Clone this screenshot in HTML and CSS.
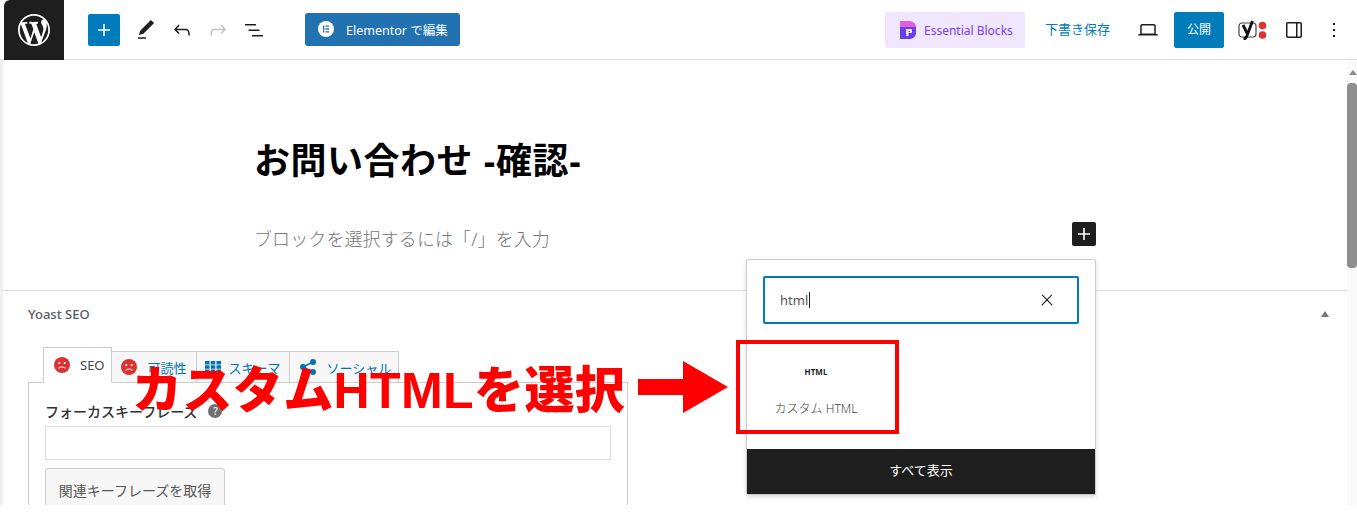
FILE: index.html
```html
<!DOCTYPE html>
<html lang="ja">

<head>
    <meta charset="UTF-8">
    <title>お問い合わせ -確認-</title>
    <link rel="stylesheet" href="styles.css">
</head>

<body>
    <div class="app">
        <header class="topbar">
            <a class="logo">
                <svg viewBox="0 0 20 20" width="32" height="32"><path fill="#fff" d="M20 10c0-5.51-4.49-10-10-10C4.48 0 0 4.49 0 10c0 5.52 4.48 10 10 10 5.51 0 10-4.48 10-10zM7.78 15.37L4.37 6.22c.55-.02 1.17-.08 1.17-.08.5-.06.44-1.13-.06-1.11 0 0-1.45.11-2.37.11-.18 0-.37 0-.58-.01C4.12 2.69 6.87 1.11 10 1.11c2.33 0 4.45.87 6.05 2.34-.68-.11-1.65.39-1.65 1.58 0 .74.45 1.36.9 2.1.35.61.55 1.36.55 2.46 0 1.49-1.4 5-1.4 5l-3.03-8.37c.54-.02.82-.17.82-.17.5-.05.44-1.25-.06-1.22 0 0-1.44.12-2.38.12-.87 0-2.33-.12-2.33-.12-.5-.03-.56 1.2-.06 1.22l.92.08 1.26 3.41zM17.41 10c.24-.64.74-1.87.43-4.25.7 1.29 1.05 2.71 1.05 4.25 0 3.29-1.73 6.24-4.4 7.78.97-2.59 1.94-5.2 2.92-7.78zM6.1 18.09C3.12 16.65 1.11 13.53 1.11 10c0-1.3.23-2.48.72-3.59C3.25 10.3 4.67 14.2 6.1 18.09zm4.03-6.63l2.58 6.98c-.86.29-1.76.45-2.71.45-.79 0-1.57-.11-2.29-.33.81-2.38 1.62-4.74 2.42-7.1z"/></svg>
            </a>

            <div class="tools">
                <button class="btn-add">
                    <svg viewBox="0 0 24 24" width="24" height="24"><path fill="#fff" d="M18 11.2h-5.2V6h-1.6v5.2H6v1.6h5.2V18h1.6v-5.2H18z"/></svg>
                </button>
                <span class="tool"><svg viewBox="0 0 24 24" width="24" height="24"><path d="M20.1 5.1L16.9 2 6.2 12.7l-1.3 4.4 4.5-1.3L20.1 5.1zM4 20.8h8v-1.5H4v1.5z"/></svg></span>
                <span class="tool"><svg viewBox="0 0 24 24" width="24" height="24"><path d="M18.3 11.7c-.6-.6-1.4-.9-2.3-.9H6.7l2.9-3.3-1.1-1-4.5 5L8.5 16l1-1-2.7-2.7H16c.5 0 .9.2 1.3.5 1 1 1 3.4 1 4.5v.3h1.5v-.2c0-1.5 0-4.3-1.5-5.7z"/></svg></span>
                <span class="tool off"><svg viewBox="0 0 24 24" width="24" height="24"><path d="M15.6 6.5l-1.1 1 2.9 3.3H8c-.9 0-1.7.3-2.3.9-1.4 1.5-1.4 4.2-1.4 5.6v.2h1.5v-.3c0-1.1 0-3.5 1-4.5.3-.3.7-.5 1.3-.5h9.2L14.5 15l1.1 1.1 4.6-4.6-4.6-5z"/></svg></span>
                <span class="tool"><svg viewBox="0 0 24 24" width="24" height="24"><path d="M3 6h11v1.5H3V6zm3.5 5.5h11V13h-11v-1.5zM21 17H10v1.5h11V17z"/></svg></span>
            </div>

            <a class="btn-elementor">
                <svg viewBox="0 0 16 16" width="16" height="16"><circle cx="8" cy="8" r="8" fill="#fff"/><path fill="#2271b1" d="M5 4.500h1.300v7H5zM7.500 4.500h3.500v1.300H7.500zM7.500 7.350h3.500v1.300H7.500zM7.500 10.200h3.500v1.300H7.500z"/></svg>
                Elementor で編集
            </a>

            <div class="right">
                <a class="btn-eb">
                    <svg viewBox="0 0 16 18" width="16" height="18">
                        <path fill="#e55fd8" d="M0 0h9c4 0 7 2.500 7 6v2H0z"/>
                        <path fill="#6a3df0" d="M0 6h16v6c0 3.500-3 6-7 6H0z"/>
                        <path fill="#f0e6fd" d="M6 8h6v4H8.500v3H6z"/>
                        <path fill="#6a3df0" d="M8.500 10H10v1H8.500z"/>
                    </svg>
                    <span class="eb-label">Essential Blocks</span>
                </a>
                <a class="draft">下書き保存</a>
                <span class="tool view"><svg viewBox="0 0 24 24" width="24" height="24"><path d="M20.5 16h-.7V8c0-1.100-.9-2-2-2H6.200c-1.100 0-2 .9-2 2v8h-.7c-.8 0-1.500.7-1.500 1.500h20c0-.8-.7-1.500-1.500-1.500zM5.700 8c0-.3.2-.5.5-.5h11.600c.3 0 .5.2.5.5v7.600H5.700V8z"/></svg></span>
                <button class="btn-publish">公開</button>
                <span class="yoast">
                    <svg viewBox="0 0 30 20" width="30" height="20">
                        <rect x="1" y="3" width="17" height="14" rx="3" fill="none" stroke="#444" stroke-width="1.200"/>
                        <path fill="none" stroke="#111" stroke-width="2.800" d="M5 5l4.500 9M14.500 1L8.500 17c-.5 1-1.500 1.800-3 2"/>
                        <circle cx="24.500" cy="5.500" r="3.800" fill="#dc3232"/>
                        <circle cx="24.500" cy="15" r="3.800" fill="#dc3232"/>
                    </svg>
                </span>
                <span class="tool side"><svg viewBox="0 0 24 24" width="24" height="24"><path d="M18 4H6c-1.100 0-2 .9-2 2v12c0 1.100.9 2 2 2h12c1.100 0 2-.9 2-2V6c0-1.100-.9-2-2-2zM6 18.500c-.3 0-.5-.2-.5-.5V6c0-.3.2-.5.5-.5h8v13H6zm12.500-.5c0 .3-.2.5-.5.5h-2.500v-13H18c.3 0 .5.2.5.5v12z"/></svg></span>
                <span class="tool more"><svg viewBox="0 0 24 24" width="24" height="24"><path d="M13 19h-2v-2h2v2zm0-6h-2v-2h2v2zm0-6h-2V5h2v2z"/></svg></span>
            </div>
        </header>

        <div class="main">
            <div class="canvas">
                <section class="editor">
                    <h1 class="post-title">お問い合わせ -確認-</h1>
                    <div class="block-row">
                        <span class="placeholder">ブロックを選択するには「/」を入力</span>
                        <span class="inserter">
                            <svg viewBox="0 0 24 24" width="24" height="24"><path fill="#fff" d="M18 11.200h-5.200V6h-1.600v5.200H6v1.600h5.200V18h1.600v-5.200H18z"/></svg>
                        </span>
                    </div>
                </section>

                <section class="seo">
                    <div class="seo-head">
                        <h2>Yoast SEO</h2>
                        <span class="caret"></span>
                    </div>
                    <div class="tabs">
                        <span class="tab active">
                            <svg viewBox="0 0 16 16" width="16" height="16"><circle cx="8" cy="8" r="8" fill="#dc3232"/><circle cx="5.300" cy="6" r="1.100" fill="#fff"/><circle cx="10.700" cy="6" r="1.100" fill="#fff"/><path d="M4.500 11.500c1-2 6-2 7 0" fill="none" stroke="#fff" stroke-width="1.100"/></svg>
                            <span class="tab-dark">SEO</span>
                        </span>
                        <span class="tab">
                            <svg viewBox="0 0 16 16" width="16" height="16"><circle cx="8" cy="8" r="8" fill="#dc3232"/><circle cx="5.300" cy="6" r="1.100" fill="#fff"/><circle cx="10.700" cy="6" r="1.100" fill="#fff"/><path d="M4.500 11.500c1-2 6-2 7 0" fill="none" stroke="#fff" stroke-width="1.100"/></svg>
                            可読性
                        </span>
                        <span class="tab tab-schema">
                            <svg viewBox="0 0 16 12" width="16" height="12"><path fill="#0075b3" d="M0 0h4.500v3.500H0zM5.750 0h4.500v3.500h-4.500zM11.500 0H16v3.500h-4.500zM0 4.250h4.500v3.500H0zM5.750 4.250h4.500v3.500h-4.500zM11.500 4.250H16v3.500h-4.500zM0 8.500h4.500V12H0zM5.750 8.500h4.500V12h-4.500zM11.500 8.500H16V12h-4.500z"/></svg>
                            スキーマ
                        </span>
                        <span class="tab tab-social">
                            <svg viewBox="0 0 16 16" width="16" height="16"><path d="M13 3L3 8l10 5" fill="none" stroke="#0075b3" stroke-width="1.500"/><circle cx="13" cy="3" r="3" fill="#0075b3"/><circle cx="3" cy="8" r="3" fill="#0075b3"/><circle cx="13" cy="13" r="3" fill="#0075b3"/></svg>
                            ソーシャル
                        </span>
                    </div>
                    <div class="tab-panel">
                        <div class="field-label">
                            フォーカスキーフレーズ
                            <span class="help">?</span>
                        </div>
                        <div class="text-input"></div>
                        <button class="btn-related">関連キーフレーズを取得</button>
                    </div>
                </section>
            </div>

            <div class="scrollbar">
                <span class="scroll-up"></span>
                <span class="scroll-thumb"></span>
            </div>
        </div>

        <!-- block inserter popover -->
        <div class="popover">
            <div class="search">
                <span class="search-text">html</span>
                <svg viewBox="0 0 24 24" width="18" height="18"><path fill="#1e1e1e" d="M13 11.800l6.100-6.300-1-1-6.100 6.200-6.100-6.200-1 1 6.100 6.300-6.500 6.700 1 1 6.500-6.600 6.500 6.600 1-1z"/></svg>
            </div>
            <div class="results">
                <div class="result">
                    <span class="result-icon">HTML</span>
                    <span class="result-name">カスタム HTML</span>
                </div>
            </div>
            <div class="show-all">すべて表示</div>
        </div>

        <!-- annotations on the screenshot -->
        <div class="note">カスタムHTMLを選択</div>
        <svg class="note-arrow" viewBox="0 0 90 52" width="90" height="52"><path fill="#f00" d="M0 18h45V0l45 26-45 26V34H0z"/></svg>
        <div class="note-box"></div>
    </div>
</body>

</html>
```

FILE: styles.css
```css
* {
    box-sizing: border-box;
}

html,
body {
    margin: 0;
    background: #fff;
}

body {
    font-family: "Noto Sans", "Noto Sans CJK JP", sans-serif;
    font-size: 13px;
    color: #1e1e1e;
}

button {
    font: inherit;
    border: 0;
    padding: 0;
}

.app {
    position: relative;
    height: 505px;
    overflow: hidden;
    padding-left: 3px;
    background: #f0f0f0;
}

/* top bar */

.topbar {
    display: flex;
    align-items: center;
    height: 60px;
    margin-left: -3px;
    padding-left: 4px;
    background: #fff;
    border-bottom: 1px solid #e0e0e0;
}

.logo {
    display: flex;
    align-items: center;
    justify-content: center;
    width: 60px;
    height: 60px;
    background: #1e1e1e;
    border-top-left-radius: 6px;
}

.tools {
    display: flex;
    align-items: center;
    margin-left: 24px;
    margin-right: 39px;
}

.tool {
    display: flex;
    width: 24px;
    height: 24px;
    margin-left: 12px;
}

.tool svg {
    fill: #1e1e1e;
}

.tool.off svg {
    fill: #c4c4c4;
}

.btn-add {
    display: flex;
    align-items: center;
    justify-content: center;
    width: 32px;
    height: 32px;
    background: #007cba;
    border-radius: 2px;
    margin-right: 2px;
}

.btn-elementor {
    display: flex;
    align-items: center;
    gap: 12px;
    width: 155px;
    height: 33px;
    padding-left: 13px;
    margin-top: -1px;
    background: #2271b1;
    border-radius: 3px;
    color: #fff;
    font-size: 12.500px;
}

.right {
    display: flex;
    align-items: center;
    margin-left: auto;
}

.btn-eb {
    display: flex;
    align-items: center;
    gap: 8px;
    width: 140px;
    height: 36px;
    padding-left: 15px;
    background: #f0e6fd;
    border-radius: 2px;
    color: #7a3ff2;
    font-size: 12px;
}

.eb-label {
    padding-top: 2px;
}

.draft {
    margin-left: 20px;
    padding-bottom: 3px;
    color: #007cba;
    font-size: 13px;
}

.tool.view {
    margin-left: 26px;
}

.btn-publish {
    width: 50px;
    height: 36px;
    margin-left: 14px;
    padding-bottom: 2px;
    background: #007cba;
    border-radius: 2px;
    color: #fff;
    font-size: 12px;
}

.yoast {
    display: flex;
    margin-left: 14px;
}

.tool.side {
    margin-left: 14px;
}

.tool.more {
    margin-left: 16px;
    margin-right: 11px;
}

/* editor area */

.main {
    display: flex;
    height: 445px;
    background: #fff;
}

.canvas {
    flex: 1;
}

.editor {
    height: 231px;
    padding: 79px 0 0 250px;
    border-bottom: 1px solid #ddd;
}

.post-title {
    margin: 0 0 0 1px;
    font-family: "Liberation Sans", "Noto Sans CJK JP", sans-serif;
    font-size: 36px;
    line-height: 46px;
    font-weight: 700;
    letter-spacing: .5px;
    color: #000;
}

.block-row {
    display: flex;
    align-items: flex-start;
    justify-content: space-between;
    width: 843px;
    margin-top: 37px;
}

.placeholder {
    margin: 3px 0 0 1px;
    font-size: 18px;
    font-weight: 300;
    letter-spacing: .1px;
    color: #757575;
}

.inserter {
    display: flex;
    width: 24px;
    height: 24px;
    background: #1e1e1e;
    border-radius: 2px;
}

/* yoast box */

.seo {
    padding: 0 7px 0 25px;
}

.seo-head {
    display: flex;
    align-items: center;
    justify-content: space-between;
    height: 46px;
    padding-right: 11px;
}

.seo-head h2 {
    margin: 0;
    font-size: 13px;
    font-weight: 500;
    color: #555d66;
}

.caret {
    width: 0;
    height: 0;
    border-left: 4.500px solid transparent;
    border-right: 4.500px solid transparent;
    border-bottom: 6px solid #72777c;
}

.tabs {
    display: flex;
    align-items: flex-end;
    height: 46px;
    padding: 10px 0 0 15px;
    position: relative;
    margin-bottom: -1px;
}

.tab {
    display: flex;
    align-items: center;
    gap: 11px;
    height: 32px;
    padding: 0 9px;
    margin-left: -1px;
    background: #f7f7f7;
    border: 1px solid #ccc;
    color: #0075b3;
    font-size: 13px;
    white-space: nowrap;
}

.tab-schema {
    gap: 8px;
    padding: 0 8px;
}

.tab-social {
    padding: 0 7px 0 10px;
}

.tab.active {
    gap: 10px;
    height: 36px;
    margin-left: 0;
    background: #fff;
    border-bottom-color: #fff;
    z-index: 1;
    padding: 0 6px 0 10px;
}

.tab-dark {
    color: #444;
    font-size: 13px;
}

.tab-panel {
    width: 600px;
    height: 200px;
    padding: 15px 16px 0;
    border: 1px solid #ccc;
}

.field-label {
    display: flex;
    align-items: center;
    gap: 11px;
    height: 28px;
    padding-bottom: 2px;
    font-size: 14px;
    font-weight: 500;
    color: #303030;
}

.help {
    width: 14px;
    height: 14px;
    border-radius: 50%;
    background: #707070;
    color: #fff;
    font-size: 10px;
    line-height: 14px;
    text-align: center;
}

.text-input {
    height: 34px;
    border: 1px solid #ddd;
}

.btn-related {
    width: 180px;
    height: 44px;
    margin-top: 8px;
    background: #f7f7f7;
    border: 1px solid #ccc;
    border-radius: 3px;
    color: #555;
    font-size: 14px;
}

.scrollbar {
    position: relative;
    flex: none;
    width: 10px;
    background: #fafafa;
}

.scroll-up {
    position: absolute;
    top: 10px;
    left: 2px;
    width: 0;
    height: 0;
    border-left: 4px solid transparent;
    border-right: 4px solid transparent;
    border-bottom: 5px solid #8a8a8a;
}

.scroll-thumb {
    position: absolute;
    top: 23px;
    left: 0;
    width: 10px;
    height: 185px;
    background: #8f8f8f;
    border-radius: 4px;
}

/* inserter popover */

.popover {
    position: absolute;
    left: 746px;
    top: 259px;
    display: flex;
    flex-direction: column;
    width: 350px;
    height: 236px;
    background: #fff;
    border: 1px solid #ccc;
    border-radius: 2px;
    box-shadow: 0 2px 4px rgba(0, 0, 0, .15);
}

.search {
    display: flex;
    align-items: center;
    justify-content: space-between;
    height: 48px;
    margin: 16px 16px 0;
    padding: 0 21px 0 15px;
    border: 2px solid #007cba;
    border-radius: 2px;
}

.search-text {
    padding-right: 1px;
    border-right: 1px solid #1e1e1e;
    color: #555;
    font-size: 13px;
    line-height: 16px;
}

.results {
    flex: 1;
}

.result {
    display: flex;
    flex-direction: column;
    align-items: center;
    width: 138px;
    padding-top: 42px;
}

.result-icon {
    font-size: 8px;
    font-weight: 700;
    line-height: 12px;
    color: #1e1e1e;
}

.result-name {
    margin-top: 23px;
    font-size: 12px;
    font-weight: 300;
    line-height: 16px;
    color: #444;
}

.show-all {
    flex: none;
    height: 45px;
    background: #1e1e1e;
    color: #fff;
    font-size: 13px;
    line-height: 43px;
    text-align: center;
}

/* red annotations */

.note {
    position: absolute;
    left: 132px;
    top: 355px;
    font-family: "Liberation Sans", "Noto Sans CJK JP", sans-serif;
    font-size: 50px;
    font-weight: 900;
    letter-spacing: .4px;
    line-height: 72px;
    color: #f00;
    white-space: nowrap;
}

.note-arrow {
    position: absolute;
    left: 638px;
    top: 361px;
}

.note-box {
    position: absolute;
    left: 736px;
    top: 340px;
    width: 163px;
    height: 94px;
    border: 4px solid #f00;
}
```
